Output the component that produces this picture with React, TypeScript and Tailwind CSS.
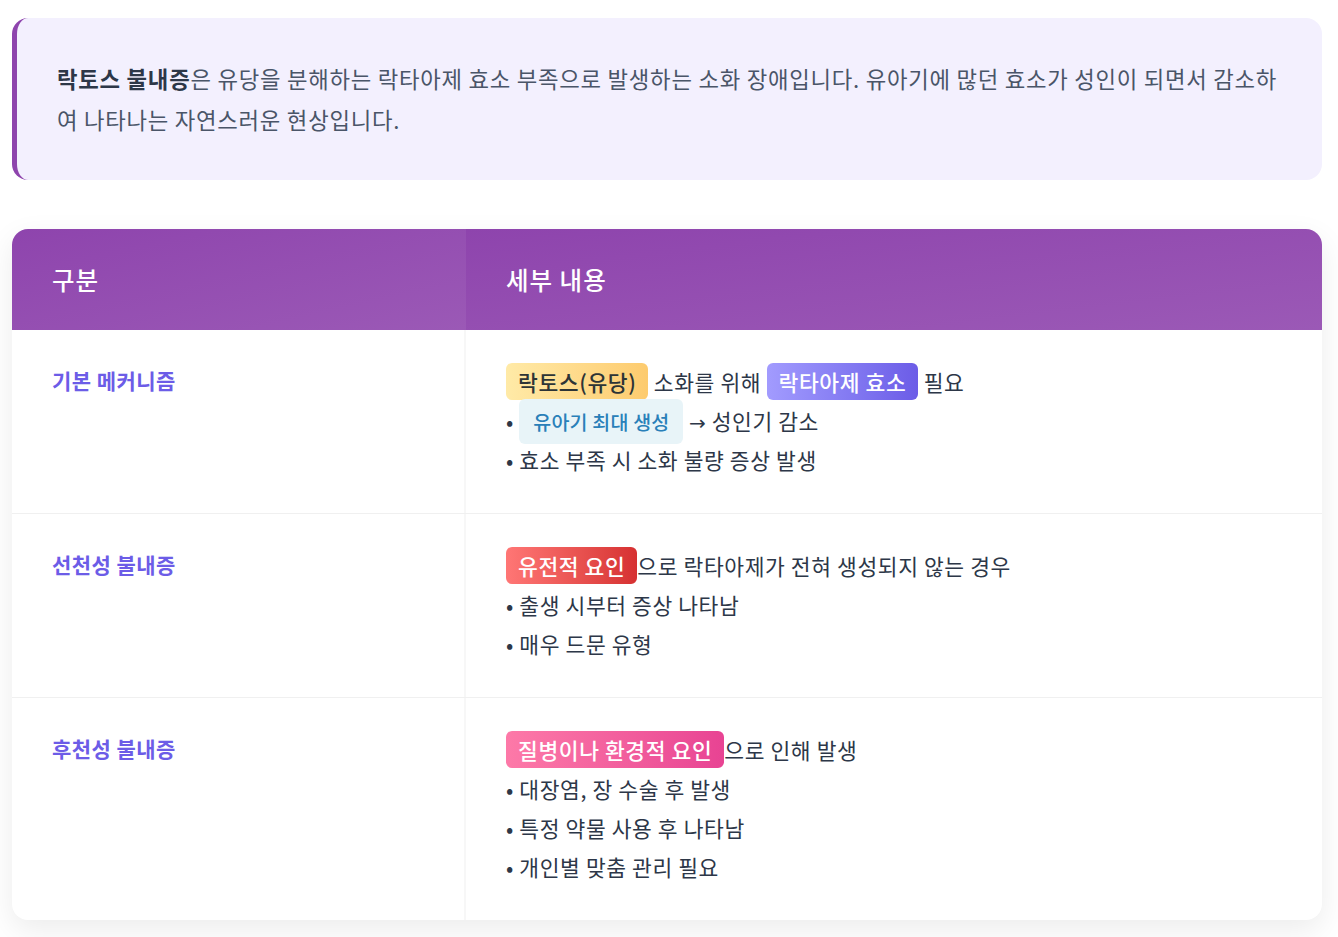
import React from 'react';

const font = { fontFamily: '"Noto Sans CJK KR", "Noto Sans", sans-serif' };

const Tag = ({ kind, children }: { kind: 'yellow' | 'violet' | 'blue' | 'red' | 'pink'; children: React.ReactNode }) => {
    const styles: Record<string, string> = {
        yellow: 'bg-gradient-to-r from-[#ffeaa7] to-[#fdcb6e] text-[#2d3436] px-[12px] py-[3px]',
        violet: 'bg-gradient-to-r from-[#a29bfe] to-[#6c5ce7] text-white px-[12px] py-[3px]',
        blue: 'bg-[#e8f4f8] text-[#2980b9] px-[14px] py-[8px] text-[19.5px] leading-[20px] tracking-[0.2px]',
        red: 'bg-gradient-to-r from-[#ff7675] to-[#d63031] text-white px-[12px] py-[3px]',
        pink: 'bg-gradient-to-r from-[#fd79a8] to-[#e84393] text-white px-[12px] py-[3px]',
    };
    return <span className={`rounded-[6px] font-medium ${styles[kind]}`}>{children}</span>;
};

const rows = [
    {
        label: '기본 메커니즘',
        lines: [
            <>
                <Tag kind="yellow">락토스(유당)</Tag> 소화를 위해 <Tag kind="violet">락타아제 효소</Tag> 필요
            </>,
            <>
                • <Tag kind="blue">유아기 최대 생성</Tag> <span className="font-['DejaVu_Sans'] text-[20px] leading-[20px]">→</span> 성인기 감소
            </>,
            <>• 효소 부족 시 소화 불량 증상 발생</>,
        ],
    },
    {
        label: '선천성 불내증',
        lines: [
            <>
                <Tag kind="red">유전적 요인</Tag>으로 락타아제가 전혀 생성되지 않는 경우
            </>,
            <>• 출생 시부터 증상 나타남</>,
            <>• 매우 드문 유형</>,
        ],
    },
    {
        label: '후천성 불내증',
        lines: [
            <>
                <Tag kind="pink">질병이나 환경적 요인</Tag>으로 인해 발생
            </>,
            <>• 대장염, 장 수술 후 발생</>,
            <>• 특정 약물 사용 후 나타남</>,
            <>• 개인별 맞춤 관리 필요</>,
        ],
    },
];

export default function App() {
    return (
        <div className="min-h-[937px] bg-white pl-3 pr-4 pt-[18px] pb-[19px]" style={font}>
            {/* Intro note */}
            <div className="rounded-2xl border-l-[5px] border-[#8e44ad] bg-[#f3f0fe] px-[40px] py-[40px] text-[22.3px] leading-[41px] tracking-[0.75px] text-[#4a5568]">
                <strong className="font-bold text-[#2d3748]">락토스 불내증</strong>은 유당을 분해하는 락타아제 효소 부족으로 발생하는 소화 장애입니다. 유아기에 많던 효소가 성인이 되면서 감소하여 나타나는 자연스러운 현상입니다.
            </div>

            {/* Table */}
            <div className="mt-[49px] overflow-hidden rounded-2xl bg-white shadow-[0_10px_30px_rgba(0,0,0,0.08)]">
                <div className="flex text-white">
                    <div className="w-[454px] shrink-0 bg-gradient-to-br from-[#8e44ad] to-[#9b59b6] px-[40px] py-[36px] text-[24.5px] font-medium leading-[29px] tracking-[1px]">
                        구분
                    </div>
                    <div className="flex-1 bg-gradient-to-br from-[#8e44ad] to-[#9b59b6] px-[40px] py-[36px] text-[24.5px] font-medium leading-[29px] tracking-[1px]">
                        세부 내용
                    </div>
                </div>
                {rows.map((row, i) => (
                    <div key={row.label} className={`flex ${i > 0 ? 'border-t border-[#f0f0f0]' : ''}`}>
                        <div className="w-[454px] shrink-0 border-r-2 border-[#f7f7f7] px-[40px] pt-[31px] text-[21px] font-bold leading-[39px] tracking-[0.45px] text-[#6c5ce7]">
                            {row.label}
                        </div>
                        <div className="flex-1 px-[40px] pt-[32px] pb-[34px] text-[21.5px] leading-[39px] tracking-[0.6px] text-[#2d3748]">
                            {row.lines.map((line, j) => (
                                <div key={j} className="h-[39px] whitespace-nowrap">
                                    {line}
                                </div>
                            ))}
                        </div>
                    </div>
                ))}
            </div>
        </div>
    );
}
